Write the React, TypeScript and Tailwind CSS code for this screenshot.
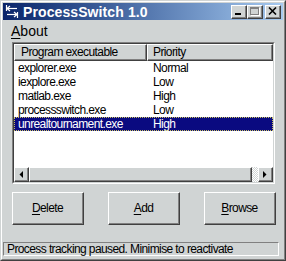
import React from 'react'

const rows = [
  { exe: 'explorer.exe', prio: 'Normal' },
  { exe: 'iexplore.exe', prio: 'Low' },
  { exe: 'matlab.exe', prio: 'High' },
  { exe: 'processswitch.exe', prio: 'Low' },
  { exe: 'unrealtournament.exe', prio: 'High' },
]

const font = "font-['Liberation_Sans',Arial,sans-serif]"

const Raised = ({ className, children }: { className?: string; children?: React.ReactNode }) => (
  <div className={'border-t border-l border-r border-b border-t-white border-l-white border-r-[#404040] border-b-[#404040] ' + (className ?? '')}>
    <div className="w-full h-full border-r border-b border-r-[#808080] border-b-[#808080] flex items-center justify-center">
      {children}
    </div>
  </div>
)

const CaptionButton = ({ children }: { children: React.ReactNode }) => (
  <Raised className="w-[16px] h-[14px] bg-[#d0d4d4]">{children}</Raised>
)

const App = () => {
  const selected = 4

  return (
    <div className={`w-[286px] h-[261px] bg-[#d0d4d4] border border-t-[#d0d4d4] border-l-[#d0d4d4] border-r-[#404040] border-b-[#404040] ${font}`}>
      <div className="w-full h-full border border-t-white border-l-white border-r-[#808080] border-b-[#808080] p-[1px] flex flex-col">
        {/* title bar */}
        <div className="h-[17px] flex items-center bg-gradient-to-r from-[#0a246a] to-[#a6caf0] pl-[2px] pr-[2px]">
          <svg width="14" height="13" viewBox="0 0 14 13" className="shrink-0">
            <g stroke="#ffffff" strokeWidth="1.2" fill="none">
              <path d="M1.5 0v6" />
              <path d="M2 3.5h10" />
              <path d="M2 3.5l3-2.5M2 3.5l3 2.5" />
              <path d="M12.5 7v6" />
              <path d="M2 9.5h10" />
              <path d="M12 9.5l-3-2.5M12 9.5l-3 2.5" />
            </g>
          </svg>
          <span className="ml-[4px] text-white font-bold text-[14px] leading-none tracking-[0.1px]">ProcessSwitch 1.0</span>
          <div className="ml-auto flex items-center">
            <CaptionButton>
              <div className="w-[6px] h-[2px] bg-black mt-[6px] mr-[1px]" />
            </CaptionButton>
            <CaptionButton>
              <div className="w-[9px] h-[8px] border border-t-2 border-[#808080] shadow-[1px_1px_0_#ffffff]" />
            </CaptionButton>
            <div className="w-[2px]" />
            <CaptionButton>
              <svg width="9" height="8" viewBox="0 0 9 8">
                <path d="M1 0.5l7 7M8 0.5l-7 7" stroke="#000" strokeWidth="1.6" />
              </svg>
            </CaptionButton>
          </div>
        </div>

        {/* menu */}
        <div className="h-[20px] flex items-end pl-[8px]">
          <span className="text-[14px] leading-none text-black mb-[2px]">
            <span className="underline underline-offset-[2px]">A</span>bout
          </span>
        </div>

        {/* list view */}
        <div className="mt-[2px] ml-[9px] w-[263px] h-[142px] border border-t-[#808080] border-l-[#808080] border-r-white border-b-white">
          <div className="w-full h-full border border-t-[#404040] border-l-[#404040] border-r-[#d0d4d4] border-b-[#d0d4d4] bg-white flex flex-col text-[12px] tracking-[-0.6px] text-black">
            <div className="h-[17px] flex shrink-0">
              <Raised className="w-[133px] h-full bg-[#d0d4d4]">
                <span className="w-full pl-[6px] leading-none">Program executable</span>
              </Raised>
              <Raised className="flex-1 h-full bg-[#d0d4d4]">
                <span className="w-full pl-[5px] leading-none">Priority</span>
              </Raised>
            </div>
            {rows.map((r, i) => (
              <div
                key={r.exe}
                className={
                  'h-[14px] flex items-center ' +
                  (i === selected ? 'bg-[#0a0a80] text-white outline outline-1 outline-dotted outline-[#c8c060] -outline-offset-1' : '')
                }
              >
                <span className="w-[133px] pl-[4px] leading-none">{r.exe}</span>
                <span className="pl-[6px] leading-none">{r.prio}</span>
              </div>
            ))}
            <div className="flex-1" />
            {/* horizontal scrollbar */}
            <div className="h-[15px] flex shrink-0 bg-[#d0d4d4]">
              <Raised className="w-[15px] h-full bg-[#d0d4d4]">
                <svg width="4" height="7" viewBox="0 0 4 7"><path d="M4 0v7L0.5 3.5z" fill="#000" /></svg>
              </Raised>
              <Raised className="w-[223px] h-full bg-[#d0d4d4]" />
              <div className="flex-1 h-full bg-[repeating-conic-gradient(#ffffff_0_25%,#d0d4d4_0_50%)] bg-[length:2px_2px]" />
              <Raised className="w-[15px] h-full bg-[#d0d4d4]">
                <svg width="4" height="7" viewBox="0 0 4 7"><path d="M0 0v7L3.5 3.5z" fill="#000" /></svg>
              </Raised>
            </div>
          </div>
        </div>

        {/* buttons */}
        <div className="mt-[8px] ml-[9px] w-[264px] flex justify-between text-[12px] tracking-[-0.6px] text-black">
          <Raised className="w-[72px] h-[33px] bg-[#d0d4d4]">
            <span><span className="underline underline-offset-[2px]">D</span>elete</span>
          </Raised>
          <Raised className="w-[72px] h-[33px] bg-[#d0d4d4]">
            <span><span className="underline underline-offset-[2px]">A</span>dd</span>
          </Raised>
          <Raised className="w-[72px] h-[33px] bg-[#d0d4d4]">
            <span><span className="underline underline-offset-[2px]">B</span>rowse</span>
          </Raised>
        </div>

        {/* status bar */}
        <div className="mt-[17px] w-[276px] h-[14px] border border-t-[#808080] border-l-[#808080] border-r-white border-b-white flex items-center pl-[3px] text-[12px] tracking-[-0.6px] text-black">
          <span className="leading-none">Process tracking paused. Minimise to reactivate</span>
        </div>
      </div>
    </div>
  )
}

export default App
